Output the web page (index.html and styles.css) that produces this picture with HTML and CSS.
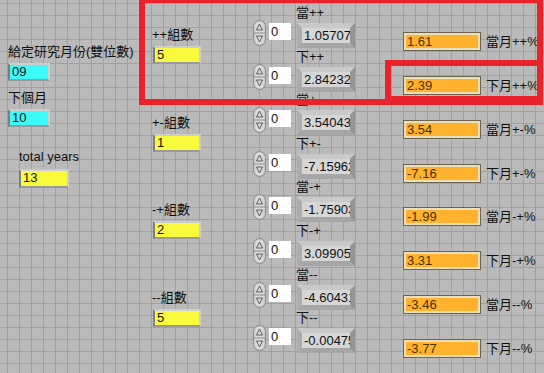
FILE: index.html
```html
<!DOCTYPE html>
<html lang="zh-Hant">
<head>
    <meta charset="UTF-8">
    <title>月份組數面板</title>
    <link rel="stylesheet" href="styles.css">
</head>
<body>
    <div class="panel">
        <div class="col-month">
            <div class="lbl">給定研究月份(雙位數)</div>
            <div class="num cyan">09</div>
            <div class="lbl lbl-next">下個月</div>
            <div class="num cyan">10</div>
            <div class="years">
                <div class="lbl">total years</div>
                <div class="num yellow wide">13</div>
            </div>
        </div>

        <div class="col-groups">
            <div class="group"><div class="lbl">++組數</div><div class="num yellow">5</div></div>
            <div class="group"><div class="lbl">+-組數</div><div class="num yellow">1</div></div>
            <div class="group"><div class="lbl">-+組數</div><div class="num yellow">2</div></div>
            <div class="group"><div class="lbl">--組數</div><div class="num yellow">5</div></div>
        </div>

        <div class="col-rows">
            <div class="row">
                <div class="lbl row-lbl">當++</div>
                <div class="ctrl">
                    <svg class="spin" width="13" height="26" viewBox="0 0 13 26"><rect x="0.5" y="0.5" width="12" height="25" rx="6" fill="#cbcbcb" stroke="#8c8c8c"/><rect x="2.5" y="2" width="8" height="22" rx="4" fill="#dcdcdc"/><line x1="1" y1="13" x2="12" y2="13" stroke="#8c8c8c"/><path d="M6.5 4 L9.5 10 L3.5 10 Z" fill="none" stroke="#5a5a5a"/><path d="M6.5 22 L9.5 16 L3.5 16 Z" fill="none" stroke="#5a5a5a"/></svg>
                    <div class="input">0</div>
                    <div class="disp"><span>1.057071</span></div>
                </div>
            </div>
            <div class="row">
                <div class="lbl row-lbl">下++</div>
                <div class="ctrl">
                    <svg class="spin" width="13" height="26" viewBox="0 0 13 26"><rect x="0.5" y="0.5" width="12" height="25" rx="6" fill="#cbcbcb" stroke="#8c8c8c"/><rect x="2.5" y="2" width="8" height="22" rx="4" fill="#dcdcdc"/><line x1="1" y1="13" x2="12" y2="13" stroke="#8c8c8c"/><path d="M6.5 4 L9.5 10 L3.5 10 Z" fill="none" stroke="#5a5a5a"/><path d="M6.5 22 L9.5 16 L3.5 16 Z" fill="none" stroke="#5a5a5a"/></svg>
                    <div class="input">0</div>
                    <div class="disp"><span>2.842325</span></div>
                </div>
            </div>
            <div class="row">
                <div class="lbl row-lbl">當+-</div>
                <div class="ctrl">
                    <svg class="spin" width="13" height="26" viewBox="0 0 13 26"><rect x="0.5" y="0.5" width="12" height="25" rx="6" fill="#cbcbcb" stroke="#8c8c8c"/><rect x="2.5" y="2" width="8" height="22" rx="4" fill="#dcdcdc"/><line x1="1" y1="13" x2="12" y2="13" stroke="#8c8c8c"/><path d="M6.5 4 L9.5 10 L3.5 10 Z" fill="none" stroke="#5a5a5a"/><path d="M6.5 22 L9.5 16 L3.5 16 Z" fill="none" stroke="#5a5a5a"/></svg>
                    <div class="input">0</div>
                    <div class="disp"><span>3.540431</span></div>
                </div>
            </div>
            <div class="row">
                <div class="lbl row-lbl">下+-</div>
                <div class="ctrl">
                    <svg class="spin" width="13" height="26" viewBox="0 0 13 26"><rect x="0.5" y="0.5" width="12" height="25" rx="6" fill="#cbcbcb" stroke="#8c8c8c"/><rect x="2.5" y="2" width="8" height="22" rx="4" fill="#dcdcdc"/><line x1="1" y1="13" x2="12" y2="13" stroke="#8c8c8c"/><path d="M6.5 4 L9.5 10 L3.5 10 Z" fill="none" stroke="#5a5a5a"/><path d="M6.5 22 L9.5 16 L3.5 16 Z" fill="none" stroke="#5a5a5a"/></svg>
                    <div class="input">0</div>
                    <div class="disp"><span>-7.15962</span></div>
                </div>
            </div>
            <div class="row">
                <div class="lbl row-lbl">當-+</div>
                <div class="ctrl">
                    <svg class="spin" width="13" height="26" viewBox="0 0 13 26"><rect x="0.5" y="0.5" width="12" height="25" rx="6" fill="#cbcbcb" stroke="#8c8c8c"/><rect x="2.5" y="2" width="8" height="22" rx="4" fill="#dcdcdc"/><line x1="1" y1="13" x2="12" y2="13" stroke="#8c8c8c"/><path d="M6.5 4 L9.5 10 L3.5 10 Z" fill="none" stroke="#5a5a5a"/><path d="M6.5 22 L9.5 16 L3.5 16 Z" fill="none" stroke="#5a5a5a"/></svg>
                    <div class="input">0</div>
                    <div class="disp"><span>-1.75903</span></div>
                </div>
            </div>
            <div class="row">
                <div class="lbl row-lbl">下-+</div>
                <div class="ctrl">
                    <svg class="spin" width="13" height="26" viewBox="0 0 13 26"><rect x="0.5" y="0.5" width="12" height="25" rx="6" fill="#cbcbcb" stroke="#8c8c8c"/><rect x="2.5" y="2" width="8" height="22" rx="4" fill="#dcdcdc"/><line x1="1" y1="13" x2="12" y2="13" stroke="#8c8c8c"/><path d="M6.5 4 L9.5 10 L3.5 10 Z" fill="none" stroke="#5a5a5a"/><path d="M6.5 22 L9.5 16 L3.5 16 Z" fill="none" stroke="#5a5a5a"/></svg>
                    <div class="input">0</div>
                    <div class="disp"><span>3.099051</span></div>
                </div>
            </div>
            <div class="row">
                <div class="lbl row-lbl">當--</div>
                <div class="ctrl">
                    <svg class="spin" width="13" height="26" viewBox="0 0 13 26"><rect x="0.5" y="0.5" width="12" height="25" rx="6" fill="#cbcbcb" stroke="#8c8c8c"/><rect x="2.5" y="2" width="8" height="22" rx="4" fill="#dcdcdc"/><line x1="1" y1="13" x2="12" y2="13" stroke="#8c8c8c"/><path d="M6.5 4 L9.5 10 L3.5 10 Z" fill="none" stroke="#5a5a5a"/><path d="M6.5 22 L9.5 16 L3.5 16 Z" fill="none" stroke="#5a5a5a"/></svg>
                    <div class="input">0</div>
                    <div class="disp"><span>-4.60431</span></div>
                </div>
            </div>
            <div class="row">
                <div class="lbl row-lbl">下--</div>
                <div class="ctrl">
                    <svg class="spin" width="13" height="26" viewBox="0 0 13 26"><rect x="0.5" y="0.5" width="12" height="25" rx="6" fill="#cbcbcb" stroke="#8c8c8c"/><rect x="2.5" y="2" width="8" height="22" rx="4" fill="#dcdcdc"/><line x1="1" y1="13" x2="12" y2="13" stroke="#8c8c8c"/><path d="M6.5 4 L9.5 10 L3.5 10 Z" fill="none" stroke="#5a5a5a"/><path d="M6.5 22 L9.5 16 L3.5 16 Z" fill="none" stroke="#5a5a5a"/></svg>
                    <div class="input">0</div>
                    <div class="disp"><span>-0.00475</span></div>
                </div>
            </div>
        </div>

        <div class="col-ind">
            <div class="ind-row"><div class="ind">1.61</div><span class="lbl">當月++%</span></div>
            <div class="ind-row"><div class="ind">2.39</div><span class="lbl">下月++%</span></div>
            <div class="ind-row"><div class="ind">3.54</div><span class="lbl">當月+-%</span></div>
            <div class="ind-row"><div class="ind">-7.16</div><span class="lbl">下月+-%</span></div>
            <div class="ind-row"><div class="ind">-1.99</div><span class="lbl">當月-+%</span></div>
            <div class="ind-row"><div class="ind">3.31</div><span class="lbl">下月-+%</span></div>
            <div class="ind-row"><div class="ind">-3.46</div><span class="lbl">當月--%</span></div>
            <div class="ind-row"><div class="ind">-3.77</div><span class="lbl">下月--%</span></div>
        </div>

        <!-- 紅框標記 -->
        <div class="mark mark-big"></div>
        <div class="mark mark-small"></div>
    </div>
</body>
</html>
```

FILE: styles.css
```css
body {
    margin: 0;
    font-family: "Liberation Sans", "Noto Sans CJK TC", sans-serif;
    font-size: 13px;
    color: #111;
}
.panel {
    position: relative;
    display: flex;
    width: 544px;
    height: 373px;
    overflow: hidden;
    background-color: #bababa;
    background-image:
        linear-gradient(to right, #a1a1a1 1px, transparent 1px),
        linear-gradient(to bottom, #a1a1a1 1px, transparent 1px);
    background-size: 12px 12px;
    background-position: 7px 3px;
}
.lbl {
    line-height: 16px;
    height: 16px;
    white-space: nowrap;
}

/* 數值框 */
.num {
    box-sizing: border-box;
    height: 18px;
    line-height: 14px;
    padding-left: 2px;
    border: 2px solid;
    border-color: #cdcdcd #cdcdcd #9a9a9a #7e7e7e;
}
.cyan {
    width: 42px;
    background: #3cfafa;
}
.yellow {
    width: 48px;
    background: #fafa3c;
}
.wide {
    width: 50px;
    height: 19px;
}

.col-month {
    box-sizing: border-box;
    width: 152px;
    padding: 44px 0 0 8px;
}
.col-month .num {
    margin-top: 3px;
}
.lbl-next {
    margin-top: 9px;
}
.years {
    margin: 22px 0 0 11px;
}
.years .num {
    margin-top: 4px;
}

.col-groups {
    box-sizing: border-box;
    width: 100px;
    padding-top: 27px;
}
.group {
    height: 87.7px;
}
.group .num {
    margin: 3px 0 0 1px;
}

.col-rows {
    box-sizing: border-box;
    width: 151px;
    padding-top: 5px;
}
.row {
    height: 43.6px;
}
.row-lbl {
    height: 15px;
    line-height: 15px;
    padding-left: 44px;
}
.ctrl {
    display: flex;
    align-items: flex-start;
}
.spin {
    display: block;
    margin-left: 1px;
}
.input {
    box-sizing: border-box;
    width: 22px;
    height: 17px;
    margin: 3px 0 0 3px;
    padding-left: 2px;
    line-height: 17px;
    background: #fff;
}
.disp {
    box-sizing: border-box;
    width: 58px;
    height: 25px;
    margin: 3px 0 0 6px;
    border: 5px solid;
    border-color: #c9c9c9 #949494 #a6a6a6 #adadad;
    background: #d6d6d6;
    overflow: hidden;
    white-space: nowrap;
    line-height: 15px;
    padding-left: 2px;
}

.col-ind {
    box-sizing: border-box;
    flex: 1;
    padding-top: 32px;
}
.ind-row {
    display: flex;
    align-items: center;
    height: 43.86px;
    align-items: flex-start;
}
.ind {
    box-sizing: border-box;
    width: 78px;
    height: 19px;
    line-height: 13px;
    padding-left: 1px;
    border: 1px solid #6f654e;
    box-shadow: inset 0 0 0 2px #eadfbc;
    padding-top: 2px;
    padding-left: 3px;
    background: #ffb22e;
    color: #4a3000;
}
.ind-row .lbl {
    margin-left: 5px;
    line-height: 19px;
    height: 19px;
}

.mark {
    position: absolute;
    border: 6px solid #e8232b;
}
.mark-big {
    left: 139px;
    top: -3px;
    width: 392px;
    height: 96px;
}
.mark-small {
    left: 385px;
    top: 60px;
    width: 146px;
    height: 30px;
}
```
